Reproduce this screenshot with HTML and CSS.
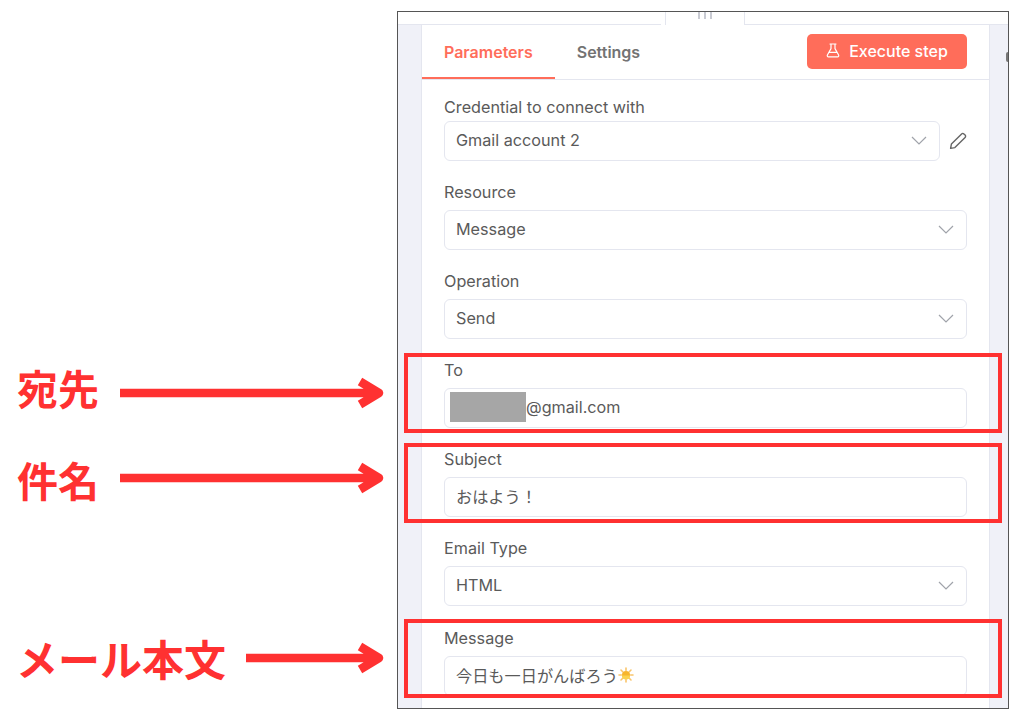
FILE: index.html
```html
<html lang="ja">
  <head>
    <meta name="viewport" content="width=device-width,initial-scale=1">
    <title>Gmail node</title>
    <link rel="stylesheet" href="styles.css">
  </head>
<body>
  <div class="frame">
    <div class="frame-top">
      <div class="top-side"></div>
      <div class="handle"><span></span><span></span><span></span></div>
      <div class="top-side"></div>
    </div>
    <div class="frame-body">
      <div class="gutter"></div>
      <div class="panel">
        <div class="tabs">
          <div class="tab active">Parameters</div>
          <div class="tab">Settings</div>
          <button class="run-button">
            <svg class="flask" viewBox="0 0 14 15" width="14" height="15" fill="none" stroke="#fff" stroke-width="1.2" stroke-linejoin="round" stroke-linecap="round">
              <path d="M4 1h6M5 1v4.6L1.4 12a1.2 1.2 0 0 0 1 1.8h9.2a1.2 1.2 0 0 0 1-1.8L9 5.6V1M3.4 9.4h7.2"/>
            </svg>
            Execute step
          </button>
        </div>
        <div class="fields">
          <div class="field first">
            <div class="label">Credential to connect with</div>
            <div class="input-row">
              <div class="input select">Gmail account 2
                <svg class="chevron" viewBox="0 0 16 9" width="16" height="9"><path d="M1 1l7 7 7-7" fill="none" stroke="#a0a3aa" stroke-width="1.2"/></svg>
              </div>
              <svg class="pencil" viewBox="0 0 18 18" width="18" height="18" fill="none" stroke="#666" stroke-width="1.4" stroke-linejoin="round">
                <path d="M1.6 16.4l.8-4.3L12.6 1.9a1.6 1.6 0 0 1 2.3 0l1.2 1.2a1.6 1.6 0 0 1 0 2.3L5.9 15.6z"/>
              </svg>
            </div>
          </div>
          <div class="field">
            <div class="label">Resource</div>
            <div class="input select">Message
              <svg class="chevron" viewBox="0 0 16 9" width="16" height="9"><path d="M1 1l7 7 7-7" fill="none" stroke="#a0a3aa" stroke-width="1.2"/></svg>
            </div>
          </div>
          <div class="field">
            <div class="label">Operation</div>
            <div class="input select">Send
              <svg class="chevron" viewBox="0 0 16 9" width="16" height="9"><path d="M1 1l7 7 7-7" fill="none" stroke="#a0a3aa" stroke-width="1.2"/></svg>
            </div>
          </div>
          <div class="field">
            <div class="label">To</div>
            <div class="input email"><span class="redacted"></span>@gmail.com</div>
          </div>
          <div class="field">
            <div class="label">Subject</div>
            <div class="input">おはよう！</div>
          </div>
          <div class="field">
            <div class="label">Email Type</div>
            <div class="input select">HTML
              <svg class="chevron" viewBox="0 0 16 9" width="16" height="9"><path d="M1 1l7 7 7-7" fill="none" stroke="#a0a3aa" stroke-width="1.2"/></svg>
            </div>
          </div>
          <div class="field last">
            <div class="label">Message</div>
            <div class="input">今日も一日がんばろう<svg class="sun" viewBox="0 0 16 16" width="16" height="16">
                <g stroke="#f9c56b" stroke-width="1.6" stroke-linecap="round">
                  <path d="M8 1v2.4M8 12.6V15M1 8h2.4M12.6 8H15M3 3l1.7 1.7M11.3 11.3L13 13M13 3l-1.7 1.7M4.7 11.3L3 13"/>
                </g>
                <circle cx="8" cy="8" r="4" fill="#f7b52c"/>
                <path d="M4 8.600h8a4 4 0 0 1-8 0z" fill="#fbd24e"/>
              </svg></div>
          </div>
        </div>
      </div>
      <div class="gutter right"><span class="dot"></span></div>
    </div>
  </div>

  <div class="mark mark-to"></div>
  <div class="mark mark-subject"></div>
  <div class="mark mark-message"></div>

  <div class="note note-to">宛先</div>
  <div class="note note-subject">件名</div>
  <div class="note note-message">メール本文</div>

  <svg class="arrow arrow-to" viewBox="0 0 270 40" width="270" height="40"><path d="M0 20H258M240 8.500L259 20 240 31.500" /></svg>
  <svg class="arrow arrow-subject" viewBox="0 0 270 40" width="270" height="40"><path d="M0 20H258M240 8.500L259 20 240 31.500" /></svg>
  <svg class="arrow arrow-message" viewBox="0 0 140 40" width="140" height="40"><path d="M0 20H132M114 8.500L133 20 114 31.500" /></svg>
</body>
</html>
```

FILE: styles.css
```css
html, body {
  padding: 0;
  margin: 0;
  background: #fff;
  font-family: Inter, "Noto Sans CJK JP", sans-serif;
  font-size: 16.2px;
}
.frame {
  box-sizing: border-box;
  width: 612px;
  height: 698px;
  margin: 11px 0 0 397px;
  border: 1.5px solid #555;
  display: flex;
  flex-direction: column;
  overflow: hidden;
}
.frame-top {
  display: flex;
  height: 13px;
  flex: none;
}
.top-side {
  flex: 1;
  border-bottom: 1.5px solid #e4e6ef;
}
.handle {
  box-sizing: border-box;
  width: 80px;
  margin-left: 4px;
  border-left: 1.5px solid #e4e6ef;
  border-right: 1.5px solid #e4e6ef;
  display: flex;
  justify-content: center;
  gap: 4px;
}
.handle span {
  width: 2px;
  height: 7px;
  background: #c9cbd3;
}
.frame-body {
  flex: 1;
  display: flex;
  min-height: 0;
}
.gutter {
  width: 23px;
  flex: none;
  background: #f0f1f8;
}
.gutter.right {
  width: 18px;
  position: relative;
}
.dot {
  position: absolute;
  right: 0;
  top: 27px;
  width: 2px;
  height: 10px;
  border-radius: 2px 0 0 2px;
  background: #777;
}
.panel {
  flex: 1;
  box-sizing: border-box;
  border-left: 1px solid #e4e6ef;
  border-right: 1px solid #e4e6ef;
  background: #fff;
  min-width: 0;
}
.tabs {
  box-sizing: border-box;
  height: 55px;
  display: flex;
  align-items: center;
  padding-right: 22px;
  border-bottom: 1.5px solid #e4e6ef;
}
.tab {
  box-sizing: border-box;
  height: 54px;
  line-height: 54px;
  padding: 0 22px;
  font-size: 16px;
  font-weight: 600;
  color: #737373;
}
.tab.active {
  color: #ff6d5a;
  border-bottom: 2.5px solid #ff6d5a;
}
.run-button {
  margin-left: auto;
  margin-top: -1px;
  width: 160px;
  height: 35px;
  padding: 0 0 2px;
  border: none;
  border-radius: 5px;
  background: #ff6d5a;
  color: #fff;
  font-family: inherit;
  font-size: 16px;
  font-weight: 500;
  display: flex;
  align-items: center;
  justify-content: center;
  gap: 9px;
}
.fields {
  display: flex;
  flex-direction: column;
  gap: 22px;
  padding: 18px 22px 0 22px;
}
.last {
  margin-top: 1px;
}
.label {
  height: 18px;
  line-height: 19px;
  margin-bottom: 9px;
  color: #5a5a5a;
}
.first .label {
  margin-bottom: 5px;
}
.input-row {
  display: flex;
  align-items: center;
  gap: 9px;
}
.input {
  box-sizing: border-box;
  flex: 1;
  height: 40px;
  padding: 0 11px 2px;
  border: 1.5px solid #e4e6ef;
  border-radius: 6px;
  display: flex;
  align-items: center;
  color: #5a5a5a;
  background: #fff;
}
.chevron {
  margin-left: auto;
  margin-right: 1px;
}
.pencil {
  flex: none;
}
.redacted {
  width: 76px;
  height: 30px;
  margin-left: -6px;
  background: #a6a6a6;
}
.sun {
  flex: none;
}
.mark {
  position: absolute;
  box-sizing: border-box;
  left: 404px;
  width: 598px;
  border: 4px solid #ff3131;
}
.mark-to {
  top: 353px;
  height: 80px;
}
.mark-subject {
  top: 443px;
  height: 80px;
}
.mark-message {
  top: 619px;
  height: 79px;
}
.note {
  position: absolute;
  font-family: "Noto Sans CJK JP", sans-serif;
  font-weight: 700;
  font-size: 41px;
  line-height: 50px;
  color: #ff3131;
  white-space: nowrap;
}
.note-to {
  left: 17px;
  top: 362px;
}
.note-subject {
  left: 17px;
  top: 454px;
}
.note-message {
  left: 16px;
  top: 633px;
  font-size: 42px;
}
.arrow {
  position: absolute;
  fill: none;
  stroke: #ff3131;
  stroke-width: 8.500;
  stroke-linejoin: round;
}
.arrow-to {
  left: 120px;
  top: 373px;
}
.arrow-subject {
  left: 120px;
  top: 458px;
}
.arrow-message {
  left: 246px;
  top: 638px;
}
```
